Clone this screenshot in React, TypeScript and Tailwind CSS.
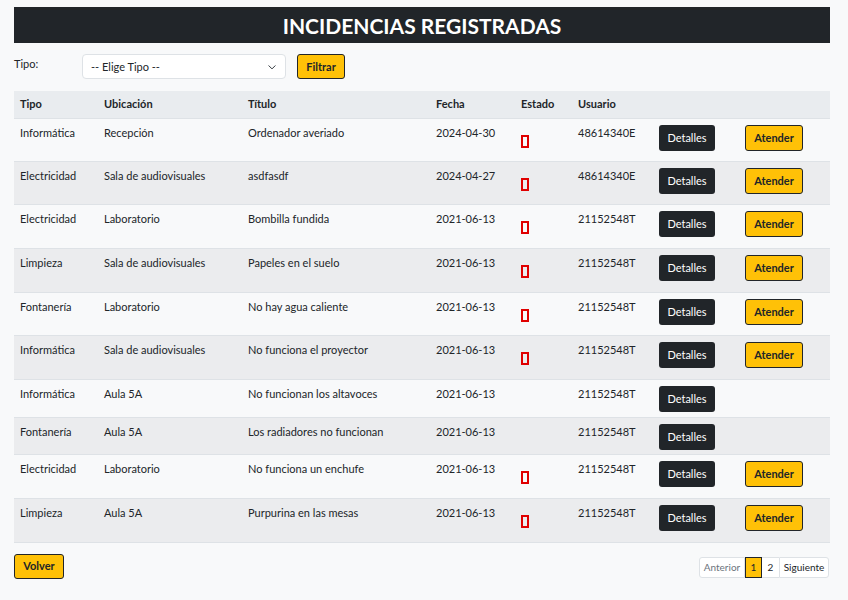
import React from 'react';

type Row = {
  tipo: string;
  ubicacion: string;
  titulo: string;
  fecha: string;
  usuario: string;
  pendiente: boolean;
  h: string;
};

const rows: Row[] = [
  { tipo: 'Informática', ubicacion: 'Recepción', titulo: 'Ordenador averiado', fecha: '2024-04-30', usuario: '48614340E', pendiente: true, h: 'h-[43px]' },
  { tipo: 'Electricidad', ubicacion: 'Sala de audiovisuales', titulo: 'asdfasdf', fecha: '2024-04-27', usuario: '48614340E', pendiente: true, h: 'h-[43px]' },
  { tipo: 'Electricidad', ubicacion: 'Laboratorio', titulo: 'Bombilla fundida', fecha: '2021-06-13', usuario: '21152548T', pendiente: true, h: 'h-[44px]' },
  { tipo: 'Limpieza', ubicacion: 'Sala de audiovisuales', titulo: 'Papeles en el suelo', fecha: '2021-06-13', usuario: '21152548T', pendiente: true, h: 'h-[44px]' },
  { tipo: 'Fontanería', ubicacion: 'Laboratorio', titulo: 'No hay agua caliente', fecha: '2021-06-13', usuario: '21152548T', pendiente: true, h: 'h-[43px]' },
  { tipo: 'Informática', ubicacion: 'Sala de audiovisuales', titulo: 'No funciona el proyector', fecha: '2021-06-13', usuario: '21152548T', pendiente: true, h: 'h-[44px]' },
  { tipo: 'Informática', ubicacion: 'Aula 5A', titulo: 'No funcionan los altavoces', fecha: '2021-06-13', usuario: '21152548T', pendiente: false, h: 'h-[38px]' },
  { tipo: 'Fontanería', ubicacion: 'Aula 5A', titulo: 'Los radiadores no funcionan', fecha: '2021-06-13', usuario: '21152548T', pendiente: false, h: 'h-[37px]' },
  { tipo: 'Electricidad', ubicacion: 'Laboratorio', titulo: 'No funciona un enchufe', fecha: '2021-06-13', usuario: '21152548T', pendiente: true, h: 'h-[44px]' },
  { tipo: 'Limpieza', ubicacion: 'Aula 5A', titulo: 'Purpurina en las mesas', fecha: '2021-06-13', usuario: '21152548T', pendiente: true, h: 'h-[44px]' },
];

const td = 'px-[6px] pt-[6px] align-top';

export default function App() {
  return (
    <div className="min-h-[600px] w-[848px] bg-[#f8f9fa] px-[14px] pt-[7px] text-[11px] leading-[16px] text-[#212529] [font-family:Lato,'Noto_Sans',sans-serif]">
      <div className="w-[816px]">
        {/* Cabecera */}
        <div className="flex h-[36px] items-center justify-center bg-[#212529]">
          <h1 className="text-[21px] font-bold leading-none text-white">INCIDENCIAS REGISTRADAS</h1>
        </div>

        {/* Filtro */}
        <div className="mt-[11px] flex items-start">
          <label className="mt-[2px] w-[68px] text-[11px]">Tipo:</label>
          <div className="flex h-[25px] w-[204px] items-center justify-between rounded-[4px] border border-[#dee2e6] bg-white pl-[8px] pr-[8px]">
            <span>-- Elige Tipo --</span>
            <svg width="10" height="10" viewBox="0 0 16 16" fill="none" stroke="#343a40" strokeWidth="1.6" strokeLinecap="round" strokeLinejoin="round">
              <path d="M3 6l5 5 5-5" />
            </svg>
          </div>
          <button className="ml-[11px] h-[25px] w-[48px] rounded-[3px] border border-[#212529] bg-[#ffc107] text-[11px] font-bold">
            Filtrar
          </button>
        </div>

        {/* Tabla */}
        <table className="mt-[12px] w-[816px] table-fixed border-collapse">
          <colgroup>
            <col className="w-[84px]" />
            <col className="w-[144px]" />
            <col className="w-[188px]" />
            <col className="w-[85px]" />
            <col className="w-[57px]" />
            <col className="w-[81px]" />
            <col className="w-[86px]" />
            <col className="w-[91px]" />
          </colgroup>
          <thead>
            <tr className="h-[27px] border-b border-[#dee2e6] bg-[#e9ecef] text-left font-bold">
              <th className="px-[6px]">Tipo</th>
              <th className="px-[6px]">Ubicación</th>
              <th className="px-[6px]">Título</th>
              <th className="px-[6px]">Fecha</th>
              <th className="px-[6px]">Estado</th>
              <th className="px-[6px]">Usuario</th>
              <th />
              <th />
            </tr>
          </thead>
          <tbody>
            {rows.map((r, i) => (
              <tr key={i} className={`${r.h} border-b border-[#dee2e6] ${i % 2 === 1 ? 'bg-[#ebecee]' : 'bg-[#f8f9fa]'}`}>
                <td className={td}>{r.tipo}</td>
                <td className={td}>{r.ubicacion}</td>
                <td className={td}>{r.titulo}</td>
                <td className={td}>{r.fecha}</td>
                <td className={td}>
                  {r.pendiente && <span className="mt-[10px] block h-[13px] w-[8px] border-2 border-[#e00000]" />}
                </td>
                <td className={td}>{r.usuario}</td>
                <td className="px-[6px] pt-[6px] align-top">
                  <button className="h-[26px] w-[56px] rounded-[3px] bg-[#212529] text-[11px] text-white">Detalles</button>
                </td>
                <td className="px-[6px] pt-[6px] align-top">
                  {r.pendiente && (
                    <button className="h-[26px] w-[58px] rounded-[3px] border border-[#212529] bg-[#ffc107] text-[11px] font-bold">
                      Atender
                    </button>
                  )}
                </td>
              </tr>
            ))}
          </tbody>
        </table>

        {/* Pie */}
        <div className="mt-[11px] flex items-start justify-between">
          <button className="h-[25px] w-[50px] rounded-[3px] border border-[#212529] bg-[#ffc107] text-[11px] font-bold">
            Volver
          </button>
          <div className="mt-[3px] mr-[1px] flex h-[21px] text-[10px]">
            <span className="flex w-[46px] items-center justify-center rounded-l-[3px] border border-[#dee2e6] bg-white text-[#6c757d]">Anterior</span>
            <span className="flex w-[17px] items-center justify-center border border-[#212529] bg-[#ffc107]">1</span>
            <span className="flex w-[17px] items-center justify-center border-y border-[#dee2e6] bg-white">2</span>
            <span className="flex w-[50px] items-center justify-center rounded-r-[3px] border border-[#dee2e6] bg-white">Siguiente</span>
          </div>
        </div>
      </div>
    </div>
  );
}
